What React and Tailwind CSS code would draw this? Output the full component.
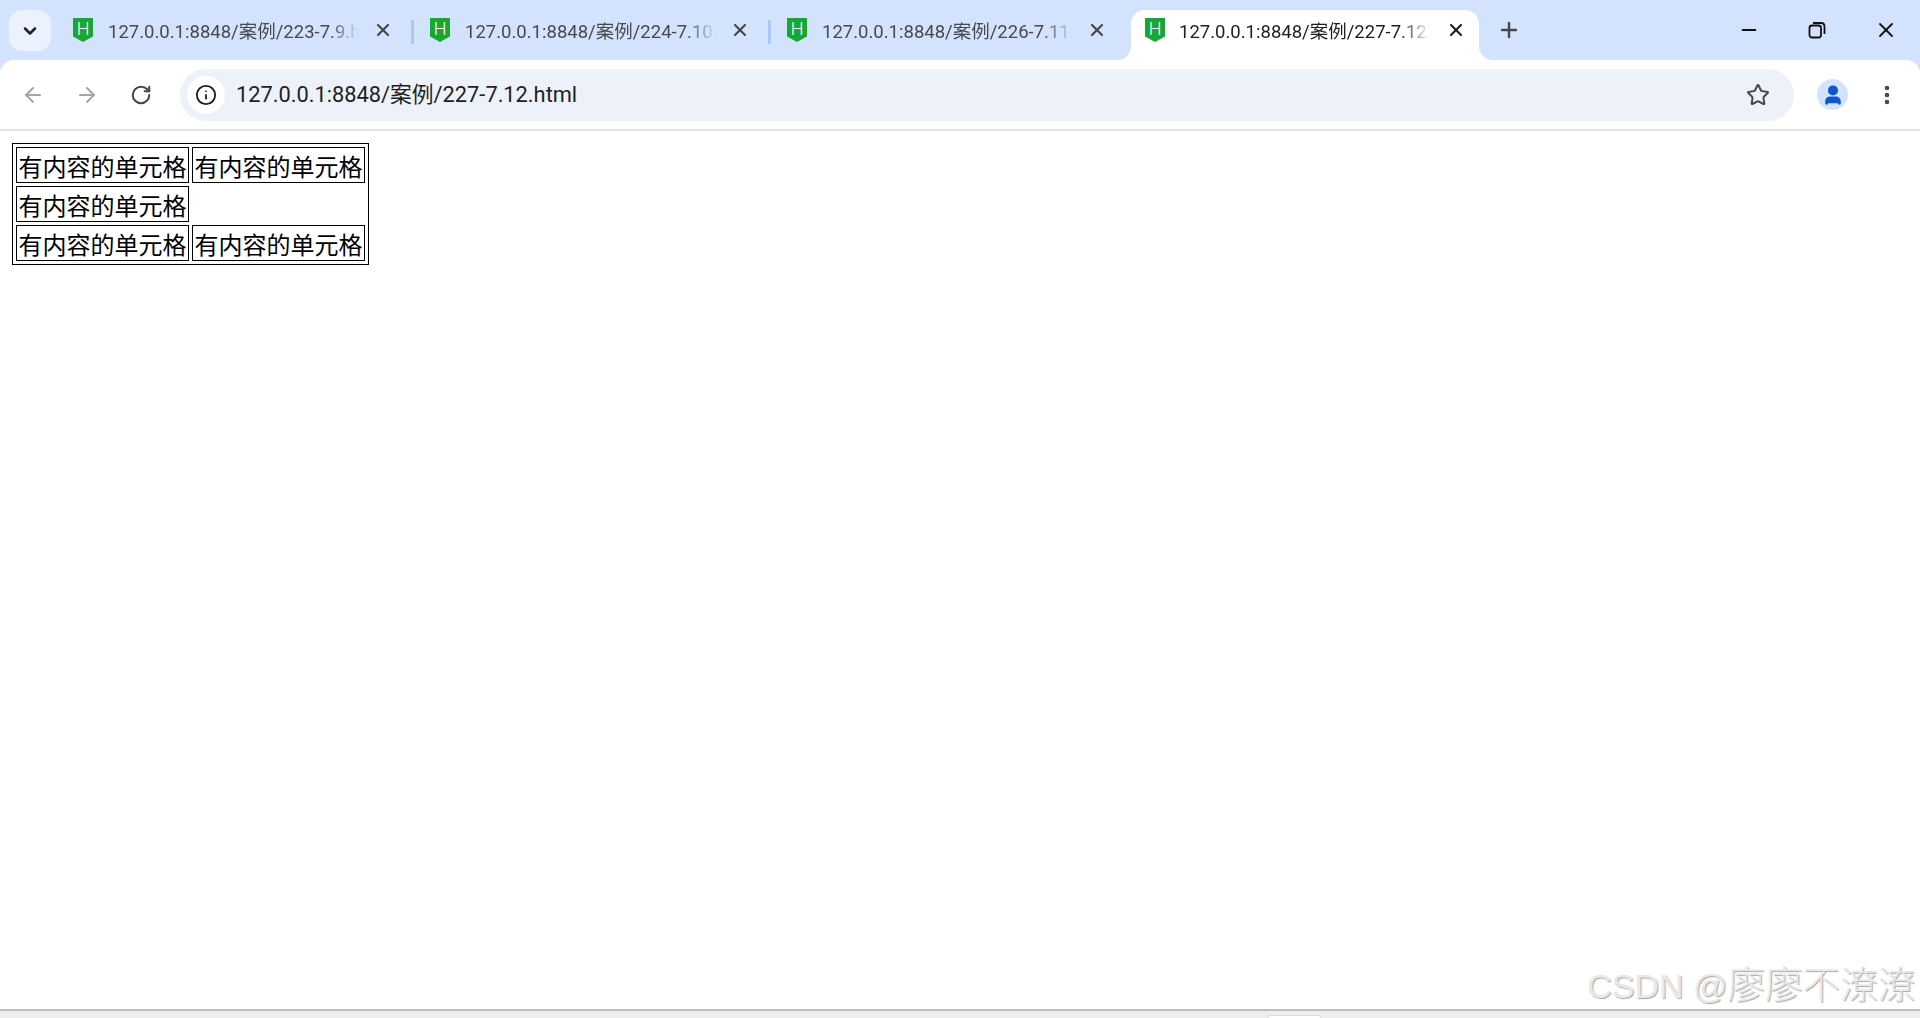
import { ArrowLeft, ArrowRight, ChevronDown, EllipsisVertical, Info, Minus, Plus, RotateCw, Star, User, X } from "lucide-react";

const UI_FONT = "font-['Roboto','Noto_Sans_CJK_SC',sans-serif]";

const TABS = [
  { title: "127.0.0.1:8848/案例/223-7.9.html", divider: true },
  { title: "127.0.0.1:8848/案例/224-7.10.html", divider: true },
  { title: "127.0.0.1:8848/案例/226-7.11.html", divider: false },
];

function Favicon() {
  return (
    <svg width="20" height="24" viewBox="0 0 20 24" className="mb-[2px] shrink-0">
      <path d="M0 0H20V18.5L10 24L0 18.5Z" fill="#1aa635" />
      <text x="10" y="17" textAnchor="middle" fontSize="18" fontWeight="300" fill="#fff" fontFamily="Roboto, sans-serif">H</text>
    </svg>
  );
}

function Tab({ title, divider }) {
  return (
    <div className="relative flex h-[42px] w-[357px] shrink-0 items-center pl-[14px]">
      <Favicon />
      <span className="ml-[15px] mt-[4px] w-[251px] overflow-hidden whitespace-nowrap text-[18.5px] text-[#47494d] [mask-image:linear-gradient(to_right,black_88%,transparent)]">
        {title}
      </span>
      <X size={20} strokeWidth={2.6} className="mb-[2px] ml-[14px] text-[#474747]" />
      {/* divider between tabs */}
      {divider && <span className="absolute right-[2px] top-[10px] h-[24px] w-[3px] bg-[#a8c7fa]" />}
    </div>
  );
}

function ActiveTab() {
  return (
    <div className="relative ml-[1px] flex h-[50px] w-[348px] shrink-0 items-center rounded-t-[14px] bg-white pb-[8px] pl-[14px]">
      <svg width="14" height="14" className="absolute bottom-0 left-[-14px]">
        <path d="M14 0V14H0C8 14 14 8 14 0Z" fill="#fff" />
      </svg>
      <Favicon />
      <span className="ml-[14px] mt-[4px] w-[251px] overflow-hidden whitespace-nowrap text-[18.5px] text-[#1f1f1f] [mask-image:linear-gradient(to_right,black_88%,transparent)]">
        127.0.0.1:8848/案例/227-7.12.html
      </span>
      <X size={20} strokeWidth={2.6} className="mb-[2px] ml-[16px] text-[#1f1f1f]" />
      <svg width="14" height="14" className="absolute bottom-0 right-[-14px]">
        <path d="M0 0V14H14C6 14 0 8 0 0Z" fill="#fff" />
      </svg>
    </div>
  );
}

function TabStrip() {
  return (
    <div className="flex h-[60px] items-start bg-[#d3e3fd] pl-[9px]">
      <button className="mt-[10px] flex h-[41px] w-[42px] items-center justify-center rounded-[13px] bg-[#ebf1fe]">
        <ChevronDown size={20} strokeWidth={3} className="text-[#1f1f1f]" />
      </button>
      <div className="ml-[8px] flex h-[60px] items-start pt-[10px]">
        {TABS.map((tab) => (
          <Tab key={tab.title} title={tab.title} divider={tab.divider} />
        ))}
        <ActiveTab />
      </div>
      <Plus size={24} strokeWidth={2.4} className="ml-[18px] mt-[18px] text-[#474747]" />
      {/* window controls */}
      <div className="ml-auto flex items-center pt-[18px]">
        <Minus size={22} strokeWidth={2} className="mr-[48px] text-[#111]" />
        <svg width="18" height="18" viewBox="0 0 18 18" fill="none" stroke="#111" strokeWidth="1.8" className="mr-[48px]">
          <rect x="1.5" y="4.5" width="11.5" height="12" rx="2.5" />
          <path d="M5 2H13C15 2 16.5 3.5 16.5 5.5V13" />
        </svg>
        <X size={24} strokeWidth={1.8} className="mr-[22px] text-[#111]" />
      </div>
    </div>
  );
}

function Toolbar() {
  return (
    <div className="bg-[#d3e3fd]">
      <div className="flex h-[69px] items-center rounded-t-[14px] bg-white pl-[21px] pr-[21px]">
        <ArrowLeft size={24} strokeWidth={2} className="text-[#a3a5a8]" />
        <ArrowRight size={24} strokeWidth={2} className="ml-[30px] text-[#a3a5a8]" />
        <RotateCw size={22} strokeWidth={2.2} className="ml-[31px] text-[#474747]" />
        {/* address bar */}
        <div className="ml-[28px] flex h-[52px] w-[1614px] items-center rounded-full bg-[#ecf1fa] pl-[7px]">
          <div className="flex h-[38px] w-[38px] items-center justify-center rounded-full bg-white">
            <Info size={22} strokeWidth={2} className="text-[#1f1f1f]" />
          </div>
          <span className="ml-[11px] mt-[1px] text-[21.8px] text-[#1f1f1f]">127.0.0.1:8848/案例/227-7.12.html</span>
          <Star size={24} strokeWidth={2} className="ml-auto mr-[24px] text-[#474747]" />
        </div>
        <div className="ml-[23px] flex h-[31px] w-[31px] items-center justify-center rounded-full bg-[#d3e3fd]">
          <User size={22} strokeWidth={3} fill="#0b57d0" className="text-[#0b57d0]" />
        </div>
        <EllipsisVertical size={24} strokeWidth={2.6} className="ml-[27px] text-[#474747]" />
      </div>
      <div className="h-[2px] bg-[#e1e1e1]" />
    </div>
  );
}

function Cell() {
  return (
    <td className="h-[36px] w-[173px] border border-black p-0 pt-[1px] text-center align-middle text-[24px] leading-[33px] text-black">
      有内容的单元格
    </td>
  );
}

export default function App() {
  return (
    <div className={`relative flex h-[1018px] flex-col overflow-hidden bg-white ${UI_FONT}`}>
      <TabStrip />
      <Toolbar />

      <main className="flex-1 pl-[12px] pt-[12px]">
        <table className="border-separate border-spacing-[3px] border border-black font-['Noto_Sans_CJK_SC',sans-serif]">
          <tbody>
            <tr>
              <Cell />
              <Cell />
            </tr>
            <tr>
              <Cell />
              <td className="h-[36px] w-[173px] p-0" />
            </tr>
            <tr>
              <Cell />
              <Cell />
            </tr>
          </tbody>
        </table>
      </main>

      {/* status strip under the page */}
      <div className="h-[9px] border-t-2 border-[#bdbdbd] bg-[#eeeeee] pl-[1267px]">
        <div className="mt-[4px] h-[4px] w-[55px] rounded-t-[4px] border border-b-0 border-[#dcdcdc] bg-white" />
      </div>

      {/* watermark */}
      <div className="absolute bottom-[10px] right-[5px] font-['Liberation_Sans','Noto_Sans_CJK_SC',sans-serif] text-[37.5px] font-light leading-[44px] text-[#e8e8e8] [text-shadow:1px_1px_1px_#a8a8a8]">
        <span className="text-[34px]">CSDN @</span>廖廖不潦潦
      </div>
    </div>
  );
}
